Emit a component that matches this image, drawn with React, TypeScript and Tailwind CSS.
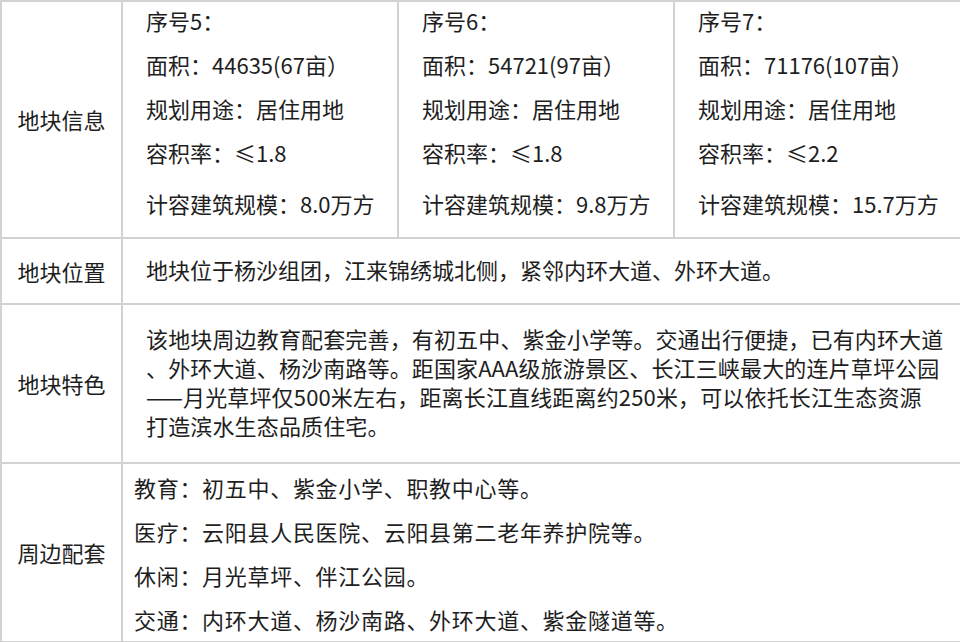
import React from 'react'

const plots = [
  { no: '序号5：', area: '面积：44635(67亩）', far: '容积率：≤1.8', scale: '计容建筑规模：8.0万方' },
  { no: '序号6：', area: '面积：54721(97亩）', far: '容积率：≤1.8', scale: '计容建筑规模：9.8万方' },
  { no: '序号7：', area: '面积：71176(107亩）', far: '容积率：≤2.2', scale: '计容建筑规模：15.7万方' },
]

const features = [
  '该地块周边教育配套完善，有初五中、紫金小学等。交通出行便捷，已有内环大道',
  '、外环大道、杨沙南路等。距国家AAA级旅游景区、长江三峡最大的连片草坪公园',
  '——月光草坪仅500米左右，距离长江直线距离约250米，可以依托长江生态资源',
  '打造滨水生态品质住宅。',
]

const facilities = [
  '教育：初五中、紫金小学、职教中心等。',
  '医疗：云阳县人民医院、云阳县第二老年养护院等。',
  '休闲：月光草坪、伴江公园。',
  '交通：内环大道、杨沙南路、外环大道、紫金隧道等。',
]

const cell = 'border-2 border-[#d2d2d2]'
const label = `${cell} align-middle text-center p-0`

export default function App() {
  return (
    <div
      className="w-[960px] h-[642px] bg-white text-[#1e1e1e] text-[22px] overflow-hidden"
      style={{ fontFamily: '"Noto Sans CJK SC", "Noto Sans", sans-serif' }}
    >
      <table className="w-[960px] table-fixed border-collapse">
        <colgroup>
          <col className="w-[121px]" />
          <col className="w-[276px]" />
          <col className="w-[276px]" />
          <col className="w-[287px]" />
        </colgroup>
        <tbody>
          <tr className="h-[237px]">
            <td className={label}>地块信息</td>
            {plots.map((p) => (
              <td key={p.no} className={`${cell} align-top pl-[23px] pr-0 pt-0 pb-0`}>
                <div className="-mt-[4px] flex flex-col leading-[44px] whitespace-nowrap">
                  <span>{p.no}</span>
                  <span>{p.area}</span>
                  <span>规划用途：居住用地</span>
                  <span>{p.far}</span>
                  <span className="mt-[7px]">{p.scale}</span>
                </div>
              </td>
            ))}
          </tr>
          <tr className="h-[66px]">
            <td className={label}>地块位置</td>
            <td colSpan={3} className={`${cell} align-middle pl-[23px] pb-[4px] whitespace-nowrap`}>
              地块位于杨沙组团，江来锦绣城北侧，紧邻内环大道、外环大道。
            </td>
          </tr>
          <tr className="h-[159px]">
            <td className={label}>地块特色</td>
            <td
              colSpan={3}
              className={`${cell} align-middle pl-[23px] pb-[4px] leading-[29px] tracking-[0.15px] whitespace-nowrap`}
            >
              {features.map((line) => (
                <div key={line}>{line}</div>
              ))}
            </td>
          </tr>
          <tr className="h-[179px]">
            <td className={label}>周边配套</td>
            <td
              colSpan={3}
              className={`${cell} align-middle pl-[11px] leading-[44px] tracking-[0.7px] whitespace-nowrap`}
            >
              {facilities.map((line) => (
                <div key={line}>{line}</div>
              ))}
            </td>
          </tr>
        </tbody>
      </table>
    </div>
  )
}
